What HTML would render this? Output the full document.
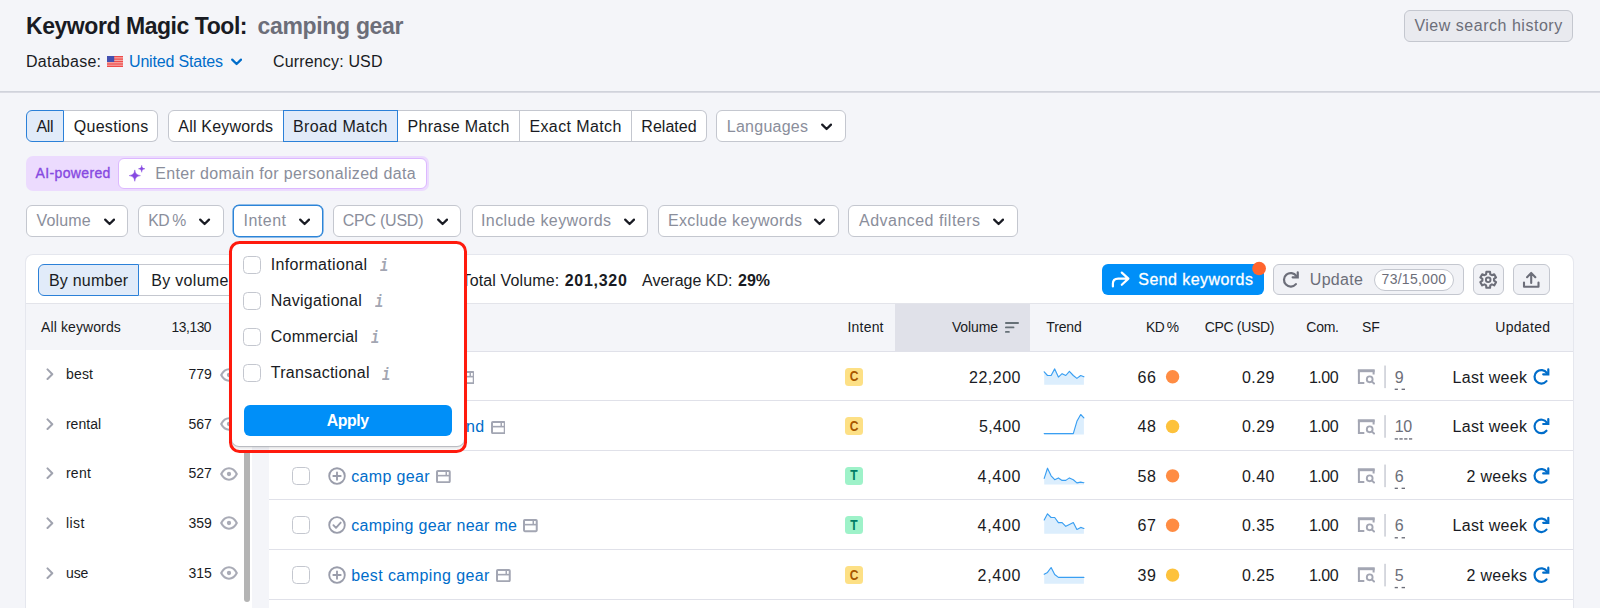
<!DOCTYPE html>
<html lang="en"><head><meta charset="utf-8"><title>Keyword Magic Tool</title>
<style>
html,body{margin:0;padding:0;}
body{width:1600px;height:608px;overflow:hidden;position:relative;background:#f4f5f9;font-family:"Liberation Sans", sans-serif;}
#app{position:absolute;left:0;top:0;width:1600px;height:608px;overflow:hidden;}
#app div,#app svg,#app span.t{position:absolute;box-sizing:border-box;}
span.t{white-space:nowrap;display:block;}

.btn{background:#fff;border:1px solid #c4c7cf;}

</style></head><body><div id="app">
<span class="t" style="top:12px;font-size:23px;line-height:29px;color:#191b23;font-weight:700;letter-spacing:-0.450px;left:26.00px;">Keyword Magic Tool:</span>
<span class="t" style="top:12px;font-size:23px;line-height:29px;color:#6c6e79;font-weight:700;letter-spacing:-0.322px;left:257.50px;">camping gear</span>
<span class="t" style="top:52px;font-size:16px;line-height:20px;color:#191b23;letter-spacing:0.258px;left:26.00px;">Database:</span>
<svg style="left:107.2px;top:56px;" width="16" height="11.2" viewBox="0 0 16 11.2"><rect width="16" height="11" fill="#f7b4b0"/>
<g fill="#ee4b4b"><rect y="0" width="16" height="1.3"/><rect y="2.45" width="16" height="1.3"/><rect y="4.9" width="16" height="1.3"/><rect y="7.35" width="16" height="1.3"/><rect y="9.7" width="16" height="1.3"/></g>
<rect width="7.2" height="6" fill="#4350b0"/></svg>
<span class="t" style="top:52px;font-size:16px;line-height:20px;color:#006dca;letter-spacing:-0.172px;left:129.00px;">United States</span>
<svg style="left:230.9px;top:58.1px;" width="11.2" height="7.6" viewBox="0 0 11.2 7.6"><path d="M1.2 1.6 L5.6 6 L10 1.6" fill="none" stroke="#006dca" stroke-width="2.25" stroke-linecap="round" stroke-linejoin="round"/></svg>
<span class="t" style="top:52px;font-size:16px;line-height:20px;color:#191b23;letter-spacing:0.160px;left:273.00px;">Currency: USD</span>
<div style="left:1403.8px;top:10.3px;width:169px;height:31.4px;background:#e9eaef;border:1px solid #c4c7cf;border-radius:6px;"></div>
<span class="t" style="top:16px;font-size:16px;line-height:20px;color:#6c6e79;letter-spacing:0.520px;left:1414.40px;">View search history</span>
<svg style="left:0px;top:89px;" width="1600" height="6" viewBox="0 89 1600 6"><rect x="0" y="91.2" width="1600" height="1.4" fill="#c8cbd4"/></svg>
<div style="left:64px;top:110px;width:94px;height:32px;background:#fff;border:1px solid #c4c7cf;border-radius:0 6px 6px 0;border-left:none;"></div>
<span class="t" style="top:117px;font-size:16px;line-height:20px;color:#191b23;letter-spacing:0.307px;left:73.70px;">Questions</span>
<div style="left:26px;top:110px;width:38px;height:32px;background:#e1ebf9;border:1px solid #2b80d8;border-radius:6px 0 0 6px;"></div>
<span class="t" style="top:117px;font-size:16px;line-height:20px;color:#191b23;letter-spacing:-0.450px;left:36.60px;">All</span>
<div style="left:168px;top:110px;width:116px;height:32px;background:#fff;border:1px solid #c4c7cf;border-radius:6px 0 0 6px;"></div>
<span class="t" style="top:117px;font-size:16px;line-height:20px;color:#191b23;letter-spacing:0.201px;left:178.30px;">All Keywords</span>
<div style="left:398px;top:110px;width:122px;height:32px;background:#fff;border:1px solid #c4c7cf;border-radius:0 0 0 0;border-left:none;"></div>
<span class="t" style="top:117px;font-size:16px;line-height:20px;color:#191b23;letter-spacing:0.298px;left:407.50px;">Phrase Match</span>
<div style="left:520px;top:110px;width:112px;height:32px;background:#fff;border:1px solid #c4c7cf;border-radius:0 0 0 0;border-left:none;"></div>
<span class="t" style="top:117px;font-size:16px;line-height:20px;color:#191b23;letter-spacing:0.397px;left:529.40px;">Exact Match</span>
<div style="left:632px;top:110px;width:75px;height:32px;background:#fff;border:1px solid #c4c7cf;border-radius:0 6px 6px 0;border-left:none;"></div>
<span class="t" style="top:117px;font-size:16px;line-height:20px;color:#191b23;letter-spacing:0.041px;left:641.30px;">Related</span>
<div style="left:283px;top:110px;width:115px;height:32px;background:#e1ebf9;border:1px solid #2b80d8;border-radius:0 0 0 0;"></div>
<span class="t" style="top:117px;font-size:16px;line-height:20px;color:#191b23;letter-spacing:0.378px;left:293.00px;">Broad Match</span>
<div style="left:716px;top:110px;width:130px;height:32px;background:#fff;border-radius:6px;border:1px solid #c4c7cf;"></div>
<span class="t" style="top:117px;font-size:16px;line-height:20px;color:#8a8e9b;letter-spacing:0.252px;left:726.80px;">Languages</span>
<svg style="left:821px;top:123.4px;" width="11.2" height="7.6" viewBox="0 0 11.2 7.6"><path d="M1.2 1.6 L5.6 6 L10 1.6" fill="none" stroke="#191b23" stroke-width="2.25" stroke-linecap="round" stroke-linejoin="round"/></svg>
<div style="left:26.2px;top:155.8px;width:402.6px;height:35.7px;background:#ecdbfe;border-radius:7px;"></div>
<span class="t" style="top:164px;font-size:14px;line-height:18px;color:#8649e1;letter-spacing:0.356px;left:35.60px;-webkit-text-stroke:0.35px #8649e1;">AI-powered</span>
<div style="left:118px;top:158.2px;width:308.6px;height:30.8px;background:#fff;border:1px solid #dcb8ff;border-radius:6px;"></div>
<svg style="left:129px;top:165.2px;" width="16.4" height="16.6" viewBox="0 0 16.4 16.6"><path d="M5.8 4.9 C6.4 8.7 7.6 9.9 11.4 10.6 C7.6 11.3 6.4 12.5 5.8 16.3 C5.2 12.5 4 11.3 0.2 10.6 C4 9.9 5.2 8.7 5.8 4.9 Z" fill="#8649e1" stroke="#8649e1" stroke-width="0.5" stroke-linejoin="round"/>
<path d="M12.7 0.3 C13 2.7 13.6 3.4 16 3.8 C13.6 4.2 13 4.9 12.7 7.3 C12.4 4.9 11.8 4.2 9.4 3.8 C11.8 3.4 12.4 2.7 12.7 0.3 Z" fill="#8649e1" stroke="#8649e1" stroke-width="0.4" stroke-linejoin="round"/></svg>
<span class="t" style="top:164px;font-size:16px;line-height:20px;color:#8a8e9b;letter-spacing:0.344px;left:155.20px;">Enter domain for personalized data</span>
<div style="left:26px;top:205px;width:102px;height:32px;background:#fff;border-radius:6px;border:1px solid #c4c7cf;"></div>
<span class="t" style="top:211px;font-size:16px;line-height:20px;color:#8a8e9b;letter-spacing:0.125px;left:36.60px;">Volume</span>
<svg style="left:104px;top:218.39999999999998px;" width="11.2" height="7.6" viewBox="0 0 11.2 7.6"><path d="M1.2 1.6 L5.6 6 L10 1.6" fill="none" stroke="#191b23" stroke-width="2.25" stroke-linecap="round" stroke-linejoin="round"/></svg>
<div style="left:138px;top:205px;width:86px;height:32px;background:#fff;border-radius:6px;border:1px solid #c4c7cf;"></div>
<span class="t" style="top:211px;font-size:15.76px;line-height:20px;color:#8a8e9b;letter-spacing:-0.450px;left:148.20px;word-spacing:-0.96px;">KD %</span>
<svg style="left:199.4px;top:218.39999999999998px;" width="11.2" height="7.6" viewBox="0 0 11.2 7.6"><path d="M1.2 1.6 L5.6 6 L10 1.6" fill="none" stroke="#191b23" stroke-width="2.25" stroke-linecap="round" stroke-linejoin="round"/></svg>
<div style="left:233px;top:205px;width:90px;height:32px;background:#fff;border-radius:6px;border:1px solid #2b84d8;box-shadow:0 0 0 0.5px #2b84d8;"></div>
<span class="t" style="top:211px;font-size:16px;line-height:20px;color:#8a8e9b;letter-spacing:0.494px;left:243.50px;">Intent</span>
<svg style="left:298.7px;top:218.39999999999998px;" width="11.2" height="7.6" viewBox="0 0 11.2 7.6"><path d="M1.2 1.6 L5.6 6 L10 1.6" fill="none" stroke="#191b23" stroke-width="2.25" stroke-linecap="round" stroke-linejoin="round"/></svg>
<div style="left:333px;top:205px;width:128px;height:32px;background:#fff;border-radius:6px;border:1px solid #c4c7cf;"></div>
<span class="t" style="top:211px;font-size:16px;line-height:20px;color:#8a8e9b;letter-spacing:-0.246px;left:342.80px;">CPC (USD)</span>
<svg style="left:437.3px;top:218.39999999999998px;" width="11.2" height="7.6" viewBox="0 0 11.2 7.6"><path d="M1.2 1.6 L5.6 6 L10 1.6" fill="none" stroke="#191b23" stroke-width="2.25" stroke-linecap="round" stroke-linejoin="round"/></svg>
<div style="left:472px;top:205px;width:176px;height:32px;background:#fff;border-radius:6px;border:1px solid #c4c7cf;"></div>
<span class="t" style="top:211px;font-size:16px;line-height:20px;color:#8a8e9b;letter-spacing:0.425px;left:481.00px;">Include keywords</span>
<svg style="left:623.7px;top:218.39999999999998px;" width="11.2" height="7.6" viewBox="0 0 11.2 7.6"><path d="M1.2 1.6 L5.6 6 L10 1.6" fill="none" stroke="#191b23" stroke-width="2.25" stroke-linecap="round" stroke-linejoin="round"/></svg>
<div style="left:658px;top:205px;width:181px;height:32px;background:#fff;border-radius:6px;border:1px solid #c4c7cf;"></div>
<span class="t" style="top:211px;font-size:16px;line-height:20px;color:#8a8e9b;letter-spacing:0.336px;left:668.00px;">Exclude keywords</span>
<svg style="left:814.3px;top:218.39999999999998px;" width="11.2" height="7.6" viewBox="0 0 11.2 7.6"><path d="M1.2 1.6 L5.6 6 L10 1.6" fill="none" stroke="#191b23" stroke-width="2.25" stroke-linecap="round" stroke-linejoin="round"/></svg>
<div style="left:848px;top:205px;width:170px;height:32px;background:#fff;border-radius:6px;border:1px solid #c4c7cf;"></div>
<span class="t" style="top:211px;font-size:16px;line-height:20px;color:#8a8e9b;letter-spacing:0.477px;left:859.00px;">Advanced filters</span>
<svg style="left:993px;top:218.39999999999998px;" width="11.2" height="7.6" viewBox="0 0 11.2 7.6"><path d="M1.2 1.6 L5.6 6 L10 1.6" fill="none" stroke="#191b23" stroke-width="2.25" stroke-linecap="round" stroke-linejoin="round"/></svg>
<div style="left:26px;top:255px;width:1547px;height:360px;background:#fff;border-radius:7px 7px 0 0;box-shadow:0 0 0 1px rgba(224,225,233,.75);"></div>
<div style="left:139px;top:264px;width:101px;height:31.5px;background:#fff;border:1px solid #c4c7cf;border-radius:0 6px 6px 0;border-left:none;"></div>
<span class="t" style="top:271px;font-size:16px;line-height:20px;color:#191b23;letter-spacing:0.312px;left:151.20px;">By volume</span>
<div style="left:38px;top:264px;width:101px;height:31.5px;background:#e1ebf9;border:1px solid #2b80d8;border-radius:6px 0 0 6px;"></div>
<span class="t" style="top:271px;font-size:16px;line-height:20px;color:#191b23;letter-spacing:0.241px;left:48.90px;">By number</span>
<span class="t" style="top:271px;font-size:16px;line-height:20px;color:#191b23;letter-spacing:0.136px;left:461.50px;">Total Volume:</span>
<span class="t" style="top:271px;font-size:16px;line-height:20px;color:#191b23;font-weight:700;letter-spacing:0.709px;left:564.70px;">201,320</span>
<span class="t" style="top:271px;font-size:16px;line-height:20px;color:#191b23;letter-spacing:-0.012px;left:642.10px;">Average KD:</span>
<span class="t" style="top:271px;font-size:16px;line-height:20px;color:#191b23;font-weight:700;letter-spacing:-0.016px;left:738.00px;">29%</span>
<div style="left:1102px;top:263.8px;width:161.5px;height:31.6px;background:#008ff8;border-radius:6px;"></div>
<svg style="left:1110px;top:270px;" width="21" height="19" viewBox="1110 270 21 19"><path d="M1112.9 286.4 V283.6 C1112.9 280.4 1115 278.6 1118.2 278.6 H1127.8 M1121.8 272.6 L1128.4 278.6 L1121.8 284.8" fill="none" stroke="#fff" stroke-width="2.2" stroke-linecap="round" stroke-linejoin="round"/></svg>
<span class="t" style="top:270px;font-size:16px;line-height:20px;color:#fff;letter-spacing:0.434px;left:1138.30px;-webkit-text-stroke:0.3px #fff;">Send keywords</span>
<svg style="left:1250px;top:259px;" width="18" height="18" viewBox="1250 259 18 18"><circle cx="1259.1" cy="268.5" r="6.85" fill="#ff642d"/></svg>
<div style="left:1273px;top:264px;width:190.5px;height:31.4px;background:#f1f2f6;border:1px solid #c4c7cf;border-radius:6px;"></div>
<svg style="left:1279px;top:268px;" width="22" height="22" viewBox="1279 268 22 22"><path d="M1296.28 275.93 A6.75 6.75 0 1 0 1295.92 284.14" fill="none" stroke="#6c6e79" stroke-width="2.2" stroke-linecap="round"/><path d="M1297.75 272.40 V277.35 H1292.65" fill="none" stroke="#6c6e79" stroke-width="2.2" stroke-linecap="round" stroke-linejoin="miter"/></svg>
<span class="t" style="top:270px;font-size:16px;line-height:20px;color:#6c6e79;letter-spacing:0.321px;left:1309.75px;">Update</span>
<div style="left:1373.5px;top:268.6px;width:80.5px;height:22px;background:#fff;border:1px solid #c4c7cf;border-radius:11px;"></div>
<span class="t" style="top:270px;font-size:14px;line-height:18px;color:#6c6e79;letter-spacing:0.263px;left:1381.60px;">73/15,000</span>
<div style="left:1472.6px;top:264px;width:31.2px;height:31.4px;background:#f1f2f6;border:1px solid #c4c7cf;border-radius:6px;"></div>
<svg style="left:1477px;top:268px;" width="24" height="24" viewBox="1477 268 24 24"><path d="M1486.09 274.29 L1486.36 271.81 L1490.04 271.81 L1490.31 274.29 L1491.91 275.21 L1494.20 274.21 L1496.04 277.40 L1494.03 278.88 L1494.03 280.72 L1496.04 282.20 L1494.20 285.39 L1491.91 284.39 L1490.31 285.31 L1490.04 287.79 L1486.36 287.79 L1486.09 285.31 L1484.49 284.39 L1482.20 285.39 L1480.36 282.20 L1482.37 280.72 L1482.37 278.88 L1480.36 277.40 L1482.20 274.21 L1484.49 275.21 Z" fill="none" stroke="#6c6e79" stroke-width="2.1" stroke-linejoin="round"/><circle cx="1488.2" cy="279.8" r="2.3" fill="none" stroke="#6c6e79" stroke-width="1.9"/></svg>
<div style="left:1513.2px;top:264px;width:37px;height:31.4px;background:#f1f2f6;border:1px solid #c4c7cf;border-radius:6px;"></div>
<svg style="left:1520px;top:268px;" width="24" height="24" viewBox="1520 268 24 24"><path d="M1531.2 283 V273 M1527.1 277.2 L1531.2 272.9 L1535.3 277.2 M1524 282.6 V286.8 H1538.5 V282.6" fill="none" stroke="#6c6e79" stroke-width="2.1" stroke-linejoin="round" stroke-linecap="round"/></svg>
<div style="left:26px;top:303px;width:226px;height:47px;background:#f4f5f9;border-top:1px solid #e3e4ea;"></div>
<span class="t" style="top:318px;font-size:14px;line-height:18px;color:#191b23;letter-spacing:0.110px;left:41.00px;">All keywords</span>
<span class="t" style="top:319px;font-size:13.79px;line-height:17px;color:#191b23;letter-spacing:-0.450px;right:1388.95px;">13,130</span>
<div style="left:252px;top:304px;width:17px;height:320px;background:#f4f5f9;"></div>
<div style="left:244px;top:450px;width:6px;height:151.5px;background:#b4b4b4;border-radius:3px;"></div>
<svg style="left:45.6px;top:368.1px;" width="8" height="12.4" viewBox="0 0 8 12.4"><path d="M1.5 1.4 L6.3 6.2 L1.5 11" fill="none" stroke="#a0a3af" stroke-width="2" stroke-linecap="round" stroke-linejoin="round"/></svg>
<span class="t" style="top:365px;font-size:14px;line-height:18px;color:#191b23;letter-spacing:0.210px;left:65.90px;">best</span>
<span class="t" style="top:365px;font-size:14px;line-height:18px;color:#191b23;letter-spacing:-0.030px;right:1388.33px;">779</span>
<svg style="left:220.2px;top:367.5px;" width="18" height="14" viewBox="0 0 18 14"><path d="M1.2 7 C3.2 3.2 6 1.3 9 1.3 C12 1.3 14.8 3.2 16.8 7 C14.8 10.8 12 12.7 9 12.7 C6 12.7 3.2 10.8 1.2 7 Z" fill="none" stroke="#a9abb6" stroke-width="2.1" stroke-linejoin="round"/><circle cx="9" cy="7" r="2.15" fill="#a9abb6"/></svg>
<svg style="left:45.6px;top:417.7px;" width="8" height="12.4" viewBox="0 0 8 12.4"><path d="M1.5 1.4 L6.3 6.2 L1.5 11" fill="none" stroke="#a0a3af" stroke-width="2" stroke-linecap="round" stroke-linejoin="round"/></svg>
<span class="t" style="top:415px;font-size:14px;line-height:18px;color:#191b23;letter-spacing:0.034px;left:65.90px;">rental</span>
<span class="t" style="top:415px;font-size:14px;line-height:18px;color:#191b23;letter-spacing:-0.030px;right:1388.33px;">567</span>
<svg style="left:220.2px;top:417.09999999999997px;" width="18" height="14" viewBox="0 0 18 14"><path d="M1.2 7 C3.2 3.2 6 1.3 9 1.3 C12 1.3 14.8 3.2 16.8 7 C14.8 10.8 12 12.7 9 12.7 C6 12.7 3.2 10.8 1.2 7 Z" fill="none" stroke="#a9abb6" stroke-width="2.1" stroke-linejoin="round"/><circle cx="9" cy="7" r="2.15" fill="#a9abb6"/></svg>
<svg style="left:45.6px;top:467.3px;" width="8" height="12.4" viewBox="0 0 8 12.4"><path d="M1.5 1.4 L6.3 6.2 L1.5 11" fill="none" stroke="#a0a3af" stroke-width="2" stroke-linecap="round" stroke-linejoin="round"/></svg>
<span class="t" style="top:464px;font-size:14px;line-height:18px;color:#191b23;letter-spacing:0.292px;left:65.90px;">rent</span>
<span class="t" style="top:464px;font-size:14px;line-height:18px;color:#191b23;letter-spacing:-0.030px;right:1388.33px;">527</span>
<svg style="left:220.2px;top:466.7px;" width="18" height="14" viewBox="0 0 18 14"><path d="M1.2 7 C3.2 3.2 6 1.3 9 1.3 C12 1.3 14.8 3.2 16.8 7 C14.8 10.8 12 12.7 9 12.7 C6 12.7 3.2 10.8 1.2 7 Z" fill="none" stroke="#a9abb6" stroke-width="2.1" stroke-linejoin="round"/><circle cx="9" cy="7" r="2.15" fill="#a9abb6"/></svg>
<svg style="left:45.6px;top:516.9px;" width="8" height="12.4" viewBox="0 0 8 12.4"><path d="M1.5 1.4 L6.3 6.2 L1.5 11" fill="none" stroke="#a0a3af" stroke-width="2" stroke-linecap="round" stroke-linejoin="round"/></svg>
<span class="t" style="top:514px;font-size:14px;line-height:18px;color:#191b23;letter-spacing:0.458px;left:65.90px;">list</span>
<span class="t" style="top:514px;font-size:14px;line-height:18px;color:#191b23;letter-spacing:-0.030px;right:1388.33px;">359</span>
<svg style="left:220.2px;top:516.3px;" width="18" height="14" viewBox="0 0 18 14"><path d="M1.2 7 C3.2 3.2 6 1.3 9 1.3 C12 1.3 14.8 3.2 16.8 7 C14.8 10.8 12 12.7 9 12.7 C6 12.7 3.2 10.8 1.2 7 Z" fill="none" stroke="#a9abb6" stroke-width="2.1" stroke-linejoin="round"/><circle cx="9" cy="7" r="2.15" fill="#a9abb6"/></svg>
<svg style="left:45.6px;top:566.5px;" width="8" height="12.4" viewBox="0 0 8 12.4"><path d="M1.5 1.4 L6.3 6.2 L1.5 11" fill="none" stroke="#a0a3af" stroke-width="2" stroke-linecap="round" stroke-linejoin="round"/></svg>
<span class="t" style="top:564px;font-size:14px;line-height:18px;color:#191b23;letter-spacing:-0.039px;left:65.90px;">use</span>
<span class="t" style="top:564px;font-size:14px;line-height:18px;color:#191b23;letter-spacing:-0.030px;right:1388.33px;">315</span>
<svg style="left:220.2px;top:565.9px;" width="18" height="14" viewBox="0 0 18 14"><path d="M1.2 7 C3.2 3.2 6 1.3 9 1.3 C12 1.3 14.8 3.2 16.8 7 C14.8 10.8 12 12.7 9 12.7 C6 12.7 3.2 10.8 1.2 7 Z" fill="none" stroke="#a9abb6" stroke-width="2.1" stroke-linejoin="round"/><circle cx="9" cy="7" r="2.15" fill="#a9abb6"/></svg>
<div style="left:269px;top:303px;width:1304px;height:48px;background:#f4f5f9;border-top:1px solid #e3e4ea;"></div>
<div style="left:269px;top:351px;width:1304px;height:1px;background:#e0e1e9;"></div>
<div style="left:895px;top:304px;width:135px;height:47px;background:#e0e1e9;"></div>
<span class="t" style="top:318px;font-size:14px;line-height:18px;color:#191b23;letter-spacing:0.194px;left:847.50px;">Intent</span>
<span class="t" style="top:318px;font-size:14px;line-height:18px;color:#191b23;letter-spacing:-0.101px;left:951.90px;">Volume</span>
<svg style="left:1005px;top:321.6px;" width="14" height="11" viewBox="0 0 14 11"><g fill="#667077"><rect x="0" y="0" width="14" height="1.9" rx=".9"/><rect x="0" y="4.45" width="9.4" height="1.9" rx=".9"/><rect x="0" y="8.9" width="4.8" height="1.9" rx=".9"/></g></svg>
<span class="t" style="top:318px;font-size:14px;line-height:18px;color:#191b23;letter-spacing:-0.141px;left:1046.30px;">Trend</span>
<span class="t" style="top:319px;font-size:13.79px;line-height:17px;color:#191b23;letter-spacing:-0.450px;left:1146.00px;word-spacing:-0.84px;">KD %</span>
<span class="t" style="top:318px;font-size:14px;line-height:18px;color:#191b23;letter-spacing:-0.318px;left:1204.70px;">CPC (USD)</span>
<span class="t" style="top:318px;font-size:14px;line-height:18px;color:#191b23;letter-spacing:-0.251px;left:1306.30px;">Com.</span>
<span class="t" style="top:318px;font-size:14px;line-height:18px;color:#191b23;left:1362.00px;">SF</span>
<span class="t" style="top:318px;font-size:14px;line-height:18px;color:#191b23;letter-spacing:0.294px;left:1495.30px;">Updated</span>
<div style="left:269px;top:400px;width:1304px;height:1px;background:#e0e1e9;"></div>
<div style="left:292px;top:368px;width:18px;height:18px;background:#fff;border:1px solid #c4c7cf;border-radius:4.5px;"></div>
<svg style="left:327.3px;top:366.82499999999993px;" width="20" height="20" viewBox="0 0 20 20"><circle cx="10" cy="10" r="7.8" fill="none" stroke="#9a9dab" stroke-width="1.85"/><path d="M10 6.3 V13.7 M6.3 10 H13.7" stroke="#9a9dab" stroke-width="1.85" stroke-linecap="round"/></svg>
<span class="t" style="top:368px;font-size:16px;line-height:20px;color:#006dca;letter-spacing:0.459px;left:351.20px;">camping gear</span>
<svg style="left:459.55px;top:370.92499999999995px;" width="14.75" height="13.15" viewBox="0 0 14.75 13.15"><rect x="1" y="1" width="12.75" height="11.15" rx="0.8" fill="none" stroke="#a3a6b3" stroke-width="2"/><path d="M1 5.65 H13.75" stroke="#a3a6b3" stroke-width="1.6"/><path d="M10.25 1 V5.65" stroke="#a3a6b3" stroke-width="1.5"/></svg>
<div style="left:845px;top:368px;width:18px;height:18px;background:#fde085;border-radius:3.5px;"></div>
<span class="t" style="top:367px;font-size:14px;line-height:18px;color:#a75800;font-weight:700;left:845.00px;width:18px;text-align:center;transform:scaleX(0.86);">C</span>
<span class="t" style="top:368px;font-size:16px;line-height:20px;color:#191b23;letter-spacing:0.512px;right:578.99px;">22,200</span>
<svg style="left:1040px;top:360px;" width="50" height="28" viewBox="1040 360 50 28"><path d="M1044.2 371.8 L1047.5 375.5 L1051.1 375.5 L1054.7 368.9 L1058.4 377.1 L1062.1 373.7 L1065.8 375.5 L1069.4 371.3 L1073.3 375.5 L1076.9 378.4 L1080.7 375.5 L1083.9 376.8 L1083.9 384.7 L1044.2 384.7 Z" fill="#dceefd"/><path d="M1044.2 371.8 L1047.5 375.5 L1051.1 375.5 L1054.7 368.9 L1058.4 377.1 L1062.1 373.7 L1065.8 375.5 L1069.4 371.3 L1073.3 375.5 L1076.9 378.4 L1080.7 375.5 L1083.9 376.8" fill="none" stroke="#3a9ff2" stroke-width="1.15" stroke-linejoin="round" stroke-linecap="round"/></svg>
<span class="t" style="top:368px;font-size:16px;line-height:20px;color:#191b23;letter-spacing:0.603px;right:443.40px;">66</span>
<svg style="left:1162px;top:366px;" width="20" height="20" viewBox="1162 366 20 20"><circle cx="1172.6" cy="376.82" r="6.7" fill="#ff8c43"/></svg>
<span class="t" style="top:368px;font-size:16px;line-height:20px;color:#191b23;letter-spacing:0.453px;right:325.05px;">0.29</span>
<span class="t" style="top:368px;font-size:16px;line-height:20px;color:#191b23;letter-spacing:-0.450px;right:261.75px;">1.00</span>
<svg style="left:1356.6px;top:368.92499999999995px;" width="18" height="16" viewBox="0 0 18 16"><path d="M16.6 5.6 V1.5 H1.9 V14 H7.3" fill="none" stroke="#a3a6b3" stroke-width="2" stroke-linejoin="miter"/><rect x="0.9" y="0.5" width="16.7" height="2.7" fill="#a3a6b3"/><circle cx="12.7" cy="10.3" r="2.9" fill="none" stroke="#a3a6b3" stroke-width="1.9"/><path d="M15 12.6 L17 14.5" stroke="#a3a6b3" stroke-width="2" stroke-linecap="round"/></svg>
<svg style="left:1380px;top:362px;" width="10" height="28" viewBox="1380 362 10 28"><rect x="1384.25" y="365.52" width="1.6" height="22.6" fill="#cdd0d8"/></svg>
<span class="t" style="top:368px;font-size:16px;line-height:20px;color:#6c6e79;left:1394.70px;">9</span>
<svg style="left:1390px;top:384px;" width="30" height="8" viewBox="1390 384 30 8"><rect x="1394.70" y="388.62" width="3.2" height="1.35" fill="#6c6e79"/><rect x="1401.60" y="388.62" width="3.4" height="1.35" fill="#6c6e79"/></svg>
<span class="t" style="top:368px;font-size:16px;line-height:20px;color:#191b23;letter-spacing:0.294px;right:72.71px;">Last week</span>
<svg style="left:1530px;top:365px;" width="22" height="22" viewBox="1530 365 22 22"><path d="M1546.83 372.95 A6.75 6.75 0 1 0 1546.47 381.16" fill="none" stroke="#006dca" stroke-width="2.2" stroke-linecap="round"/><path d="M1548.30 369.42 V374.37 H1543.20" fill="none" stroke="#006dca" stroke-width="2.2" stroke-linecap="round" stroke-linejoin="miter"/></svg>
<div style="left:269px;top:450px;width:1304px;height:1px;background:#e0e1e9;"></div>
<div style="left:292px;top:417px;width:18px;height:18px;background:#fff;border:1px solid #c4c7cf;border-radius:4.5px;"></div>
<svg style="left:327.3px;top:416.44999999999993px;" width="20" height="20" viewBox="0 0 20 20"><circle cx="10" cy="10" r="7.8" fill="none" stroke="#9a9dab" stroke-width="1.85"/><path d="M10 6.3 V13.7 M6.3 10 H13.7" stroke="#9a9dab" stroke-width="1.85" stroke-linecap="round"/></svg>
<span class="t" style="top:417px;font-size:16px;line-height:20px;color:#006dca;letter-spacing:0.327px;left:351.20px;">camping gear and</span>
<svg style="left:490.55px;top:420.54999999999995px;" width="14.75" height="13.15" viewBox="0 0 14.75 13.15"><rect x="1" y="1" width="12.75" height="11.15" rx="0.8" fill="none" stroke="#a3a6b3" stroke-width="2"/><path d="M1 5.65 H13.75" stroke="#a3a6b3" stroke-width="1.6"/><path d="M10.25 1 V5.65" stroke="#a3a6b3" stroke-width="1.5"/></svg>
<div style="left:845px;top:417px;width:18px;height:18px;background:#fde085;border-radius:3.5px;"></div>
<span class="t" style="top:417px;font-size:14px;line-height:18px;color:#a75800;font-weight:700;left:845.00px;width:18px;text-align:center;transform:scaleX(0.86);">C</span>
<span class="t" style="top:417px;font-size:16px;line-height:20px;color:#191b23;letter-spacing:0.363px;right:579.14px;">5,400</span>
<svg style="left:1040px;top:410px;" width="50" height="28" viewBox="1040 410 50 28"><path d="M1044.2 433.6 L1047.5 433.6 L1051.1 433.6 L1054.7 433.6 L1058.4 433.6 L1062.1 433.6 L1065.8 433.6 L1069.4 433.6 L1073.3 433.6 L1076.9 421.3 L1080.7 414.5 L1083.9 417.9 L1083.9 434.5 L1044.2 434.5 Z" fill="#dceefd"/><path d="M1044.2 433.6 L1047.5 433.6 L1051.1 433.6 L1054.7 433.6 L1058.4 433.6 L1062.1 433.6 L1065.8 433.6 L1069.4 433.6 L1073.3 433.6 L1076.9 421.3 L1080.7 414.5 L1083.9 417.9" fill="none" stroke="#3a9ff2" stroke-width="1.15" stroke-linejoin="round" stroke-linecap="round"/></svg>
<span class="t" style="top:417px;font-size:16px;line-height:20px;color:#191b23;letter-spacing:0.603px;right:443.40px;">48</span>
<svg style="left:1162px;top:416px;" width="20" height="20" viewBox="1162 416 20 20"><circle cx="1172.6" cy="426.45" r="6.7" fill="#fdc23c"/></svg>
<span class="t" style="top:417px;font-size:16px;line-height:20px;color:#191b23;letter-spacing:0.453px;right:325.05px;">0.29</span>
<span class="t" style="top:417px;font-size:16px;line-height:20px;color:#191b23;letter-spacing:-0.450px;right:261.75px;">1.00</span>
<svg style="left:1356.6px;top:418.54999999999995px;" width="18" height="16" viewBox="0 0 18 16"><path d="M16.6 5.6 V1.5 H1.9 V14 H7.3" fill="none" stroke="#a3a6b3" stroke-width="2" stroke-linejoin="miter"/><rect x="0.9" y="0.5" width="16.7" height="2.7" fill="#a3a6b3"/><circle cx="12.7" cy="10.3" r="2.9" fill="none" stroke="#a3a6b3" stroke-width="1.9"/><path d="M15 12.6 L17 14.5" stroke="#a3a6b3" stroke-width="2" stroke-linecap="round"/></svg>
<svg style="left:1380px;top:412px;" width="10" height="28" viewBox="1380 412 10 28"><rect x="1384.25" y="415.15" width="1.6" height="22.6" fill="#cdd0d8"/></svg>
<span class="t" style="top:417px;font-size:16px;line-height:20px;color:#6c6e79;letter-spacing:-0.297px;left:1394.70px;">10</span>
<svg style="left:1390px;top:434px;" width="30" height="8" viewBox="1390 434 30 8"><rect x="1394.70" y="438.25" width="3.2" height="1.35" fill="#6c6e79"/><rect x="1399.40" y="438.25" width="3.3" height="1.35" fill="#6c6e79"/><rect x="1404.20" y="438.25" width="3.2" height="1.35" fill="#6c6e79"/><rect x="1409.00" y="438.25" width="3.2" height="1.35" fill="#6c6e79"/></svg>
<span class="t" style="top:417px;font-size:16px;line-height:20px;color:#191b23;letter-spacing:0.294px;right:72.71px;">Last week</span>
<svg style="left:1530px;top:415px;" width="22" height="22" viewBox="1530 415 22 22"><path d="M1546.83 422.58 A6.75 6.75 0 1 0 1546.47 430.79" fill="none" stroke="#006dca" stroke-width="2.2" stroke-linecap="round"/><path d="M1548.30 419.05 V424.00 H1543.20" fill="none" stroke="#006dca" stroke-width="2.2" stroke-linecap="round" stroke-linejoin="miter"/></svg>
<div style="left:269px;top:499px;width:1304px;height:1px;background:#e0e1e9;"></div>
<div style="left:292px;top:467px;width:18px;height:18px;background:#fff;border:1px solid #c4c7cf;border-radius:4.5px;"></div>
<svg style="left:327.3px;top:465.84999999999997px;" width="20" height="20" viewBox="0 0 20 20"><circle cx="10" cy="10" r="7.8" fill="none" stroke="#9a9dab" stroke-width="1.85"/><path d="M10 6.3 V13.7 M6.3 10 H13.7" stroke="#9a9dab" stroke-width="1.85" stroke-linecap="round"/></svg>
<span class="t" style="top:467px;font-size:16px;line-height:20px;color:#006dca;letter-spacing:0.351px;left:351.20px;">camp gear</span>
<svg style="left:435.95000000000005px;top:469.95px;" width="14.75" height="13.15" viewBox="0 0 14.75 13.15"><rect x="1" y="1" width="12.75" height="11.15" rx="0.8" fill="none" stroke="#a3a6b3" stroke-width="2"/><path d="M1 5.65 H13.75" stroke="#a3a6b3" stroke-width="1.6"/><path d="M10.25 1 V5.65" stroke="#a3a6b3" stroke-width="1.5"/></svg>
<div style="left:845px;top:467px;width:18px;height:18px;background:#9ef2c9;border-radius:3.5px;"></div>
<span class="t" style="top:466px;font-size:14px;line-height:18px;color:#007c65;font-weight:700;left:845.00px;width:18px;text-align:center;transform:scaleX(0.86);">T</span>
<span class="t" style="top:467px;font-size:16px;line-height:20px;color:#191b23;letter-spacing:0.738px;right:578.76px;">4,400</span>
<svg style="left:1040px;top:460px;" width="50" height="28" viewBox="1040 460 50 28"><path d="M1044.2 478.4 L1047.5 468.2 L1051.1 475.8 L1054.7 479.7 L1058.4 477.9 L1062.1 480.4 L1065.8 480.4 L1069.4 477.9 L1073.3 479.7 L1076.9 482.9 L1080.7 482.1 L1083.9 482.7 L1083.9 484.5 L1044.2 484.5 Z" fill="#dceefd"/><path d="M1044.2 478.4 L1047.5 468.2 L1051.1 475.8 L1054.7 479.7 L1058.4 477.9 L1062.1 480.4 L1065.8 480.4 L1069.4 477.9 L1073.3 479.7 L1076.9 482.9 L1080.7 482.1 L1083.9 482.7" fill="none" stroke="#3a9ff2" stroke-width="1.15" stroke-linejoin="round" stroke-linecap="round"/></svg>
<span class="t" style="top:467px;font-size:16px;line-height:20px;color:#191b23;letter-spacing:0.603px;right:443.40px;">58</span>
<svg style="left:1162px;top:465px;" width="20" height="20" viewBox="1162 465 20 20"><circle cx="1172.6" cy="475.85" r="6.7" fill="#ff8c43"/></svg>
<span class="t" style="top:467px;font-size:16px;line-height:20px;color:#191b23;letter-spacing:0.453px;right:325.05px;">0.40</span>
<span class="t" style="top:467px;font-size:16px;line-height:20px;color:#191b23;letter-spacing:-0.450px;right:261.75px;">1.00</span>
<svg style="left:1356.6px;top:467.95px;" width="18" height="16" viewBox="0 0 18 16"><path d="M16.6 5.6 V1.5 H1.9 V14 H7.3" fill="none" stroke="#a3a6b3" stroke-width="2" stroke-linejoin="miter"/><rect x="0.9" y="0.5" width="16.7" height="2.7" fill="#a3a6b3"/><circle cx="12.7" cy="10.3" r="2.9" fill="none" stroke="#a3a6b3" stroke-width="1.9"/><path d="M15 12.6 L17 14.5" stroke="#a3a6b3" stroke-width="2" stroke-linecap="round"/></svg>
<svg style="left:1380px;top:461px;" width="10" height="28" viewBox="1380 461 10 28"><rect x="1384.25" y="464.55" width="1.6" height="22.6" fill="#cdd0d8"/></svg>
<span class="t" style="top:467px;font-size:16px;line-height:20px;color:#6c6e79;left:1394.70px;">6</span>
<svg style="left:1390px;top:483px;" width="30" height="8" viewBox="1390 483 30 8"><rect x="1394.70" y="487.65" width="3.2" height="1.35" fill="#6c6e79"/><rect x="1401.60" y="487.65" width="3.4" height="1.35" fill="#6c6e79"/></svg>
<span class="t" style="top:467px;font-size:16px;line-height:20px;color:#191b23;letter-spacing:0.299px;right:72.70px;">2 weeks</span>
<svg style="left:1530px;top:464px;" width="22" height="22" viewBox="1530 464 22 22"><path d="M1546.83 471.98 A6.75 6.75 0 1 0 1546.47 480.19" fill="none" stroke="#006dca" stroke-width="2.2" stroke-linecap="round"/><path d="M1548.30 468.45 V473.40 H1543.20" fill="none" stroke="#006dca" stroke-width="2.2" stroke-linecap="round" stroke-linejoin="miter"/></svg>
<div style="left:269px;top:549px;width:1304px;height:1px;background:#e0e1e9;"></div>
<div style="left:292px;top:516px;width:18px;height:18px;background:#fff;border:1px solid #c4c7cf;border-radius:4.5px;"></div>
<svg style="left:327.3px;top:515.3px;" width="20" height="20" viewBox="0 0 20 20"><circle cx="10" cy="10" r="7.8" fill="none" stroke="#9a9dab" stroke-width="1.85"/><path d="M6.4 10.2 L9 12.8 L13.7 7.6" fill="none" stroke="#9a9dab" stroke-width="1.85" stroke-linecap="round" stroke-linejoin="round"/></svg>
<span class="t" style="top:516px;font-size:16px;line-height:20px;color:#006dca;letter-spacing:0.300px;left:351.20px;">camping gear near me</span>
<svg style="left:523.35px;top:519.4px;" width="14.75" height="13.15" viewBox="0 0 14.75 13.15"><rect x="1" y="1" width="12.75" height="11.15" rx="0.8" fill="none" stroke="#a3a6b3" stroke-width="2"/><path d="M1 5.65 H13.75" stroke="#a3a6b3" stroke-width="1.6"/><path d="M10.25 1 V5.65" stroke="#a3a6b3" stroke-width="1.5"/></svg>
<div style="left:845px;top:516px;width:18px;height:18px;background:#9ef2c9;border-radius:3.5px;"></div>
<span class="t" style="top:516px;font-size:14px;line-height:18px;color:#007c65;font-weight:700;left:845.00px;width:18px;text-align:center;transform:scaleX(0.86);">T</span>
<span class="t" style="top:516px;font-size:16px;line-height:20px;color:#191b23;letter-spacing:0.738px;right:578.76px;">4,400</span>
<svg style="left:1040px;top:509px;" width="50" height="28" viewBox="1040 509 50 28"><path d="M1044.2 520.0 L1047.5 513.8 L1051.1 517.5 L1054.7 517.5 L1058.4 522.6 L1062.1 522.6 L1065.8 526.3 L1069.4 524.5 L1073.3 522.6 L1076.9 529.5 L1080.7 527.4 L1083.9 528.5 L1083.9 533.7 L1044.2 533.7 Z" fill="#dceefd"/><path d="M1044.2 520.0 L1047.5 513.8 L1051.1 517.5 L1054.7 517.5 L1058.4 522.6 L1062.1 522.6 L1065.8 526.3 L1069.4 524.5 L1073.3 522.6 L1076.9 529.5 L1080.7 527.4 L1083.9 528.5" fill="none" stroke="#3a9ff2" stroke-width="1.15" stroke-linejoin="round" stroke-linecap="round"/></svg>
<span class="t" style="top:516px;font-size:16px;line-height:20px;color:#191b23;letter-spacing:0.603px;right:443.40px;">67</span>
<svg style="left:1162px;top:515px;" width="20" height="20" viewBox="1162 515 20 20"><circle cx="1172.6" cy="525.30" r="6.7" fill="#ff8c43"/></svg>
<span class="t" style="top:516px;font-size:16px;line-height:20px;color:#191b23;letter-spacing:0.453px;right:325.05px;">0.35</span>
<span class="t" style="top:516px;font-size:16px;line-height:20px;color:#191b23;letter-spacing:-0.450px;right:261.75px;">1.00</span>
<svg style="left:1356.6px;top:517.4px;" width="18" height="16" viewBox="0 0 18 16"><path d="M16.6 5.6 V1.5 H1.9 V14 H7.3" fill="none" stroke="#a3a6b3" stroke-width="2" stroke-linejoin="miter"/><rect x="0.9" y="0.5" width="16.7" height="2.7" fill="#a3a6b3"/><circle cx="12.7" cy="10.3" r="2.9" fill="none" stroke="#a3a6b3" stroke-width="1.9"/><path d="M15 12.6 L17 14.5" stroke="#a3a6b3" stroke-width="2" stroke-linecap="round"/></svg>
<svg style="left:1380px;top:511px;" width="10" height="28" viewBox="1380 511 10 28"><rect x="1384.25" y="514.00" width="1.6" height="22.6" fill="#cdd0d8"/></svg>
<span class="t" style="top:516px;font-size:16px;line-height:20px;color:#6c6e79;left:1394.70px;">6</span>
<svg style="left:1390px;top:533px;" width="30" height="8" viewBox="1390 533 30 8"><rect x="1394.70" y="537.10" width="3.2" height="1.35" fill="#6c6e79"/><rect x="1401.60" y="537.10" width="3.4" height="1.35" fill="#6c6e79"/></svg>
<span class="t" style="top:516px;font-size:16px;line-height:20px;color:#191b23;letter-spacing:0.294px;right:72.71px;">Last week</span>
<svg style="left:1530px;top:514px;" width="22" height="22" viewBox="1530 514 22 22"><path d="M1546.83 521.43 A6.75 6.75 0 1 0 1546.47 529.64" fill="none" stroke="#006dca" stroke-width="2.2" stroke-linecap="round"/><path d="M1548.30 517.90 V522.85 H1543.20" fill="none" stroke="#006dca" stroke-width="2.2" stroke-linecap="round" stroke-linejoin="miter"/></svg>
<div style="left:269px;top:599px;width:1304px;height:1px;background:#e0e1e9;"></div>
<div style="left:292px;top:566px;width:18px;height:18px;background:#fff;border:1px solid #c4c7cf;border-radius:4.5px;"></div>
<svg style="left:327.3px;top:565.1px;" width="20" height="20" viewBox="0 0 20 20"><circle cx="10" cy="10" r="7.8" fill="none" stroke="#9a9dab" stroke-width="1.85"/><path d="M10 6.3 V13.7 M6.3 10 H13.7" stroke="#9a9dab" stroke-width="1.85" stroke-linecap="round"/></svg>
<span class="t" style="top:566px;font-size:16px;line-height:20px;color:#006dca;letter-spacing:0.410px;left:351.20px;">best camping gear</span>
<svg style="left:495.75px;top:569.2px;" width="14.75" height="13.15" viewBox="0 0 14.75 13.15"><rect x="1" y="1" width="12.75" height="11.15" rx="0.8" fill="none" stroke="#a3a6b3" stroke-width="2"/><path d="M1 5.65 H13.75" stroke="#a3a6b3" stroke-width="1.6"/><path d="M10.25 1 V5.65" stroke="#a3a6b3" stroke-width="1.5"/></svg>
<div style="left:845px;top:566px;width:18px;height:18px;background:#fde085;border-radius:3.5px;"></div>
<span class="t" style="top:566px;font-size:14px;line-height:18px;color:#a75800;font-weight:700;left:845.00px;width:18px;text-align:center;transform:scaleX(0.86);">C</span>
<span class="t" style="top:566px;font-size:16px;line-height:20px;color:#191b23;letter-spacing:0.738px;right:578.76px;">2,400</span>
<svg style="left:1040px;top:559px;" width="50" height="28" viewBox="1040 559 50 28"><path d="M1044.2 574.3 L1047.5 572.4 L1051.1 567.5 L1054.7 574.5 L1058.4 577.4 L1062.1 577.4 L1065.8 577.4 L1069.4 577.4 L1073.3 577.4 L1076.9 577.4 L1080.7 577.4 L1083.9 577.4 L1083.9 583.7 L1044.2 583.7 Z" fill="#dceefd"/><path d="M1044.2 574.3 L1047.5 572.4 L1051.1 567.5 L1054.7 574.5 L1058.4 577.4 L1062.1 577.4 L1065.8 577.4 L1069.4 577.4 L1073.3 577.4 L1076.9 577.4 L1080.7 577.4 L1083.9 577.4" fill="none" stroke="#3a9ff2" stroke-width="1.15" stroke-linejoin="round" stroke-linecap="round"/></svg>
<span class="t" style="top:566px;font-size:16px;line-height:20px;color:#191b23;letter-spacing:0.603px;right:443.40px;">39</span>
<svg style="left:1162px;top:565px;" width="20" height="20" viewBox="1162 565 20 20"><circle cx="1172.6" cy="575.10" r="6.7" fill="#fdc23c"/></svg>
<span class="t" style="top:566px;font-size:16px;line-height:20px;color:#191b23;letter-spacing:0.453px;right:325.05px;">0.25</span>
<span class="t" style="top:566px;font-size:16px;line-height:20px;color:#191b23;letter-spacing:-0.450px;right:261.75px;">1.00</span>
<svg style="left:1356.6px;top:567.2px;" width="18" height="16" viewBox="0 0 18 16"><path d="M16.6 5.6 V1.5 H1.9 V14 H7.3" fill="none" stroke="#a3a6b3" stroke-width="2" stroke-linejoin="miter"/><rect x="0.9" y="0.5" width="16.7" height="2.7" fill="#a3a6b3"/><circle cx="12.7" cy="10.3" r="2.9" fill="none" stroke="#a3a6b3" stroke-width="1.9"/><path d="M15 12.6 L17 14.5" stroke="#a3a6b3" stroke-width="2" stroke-linecap="round"/></svg>
<svg style="left:1380px;top:561px;" width="10" height="28" viewBox="1380 561 10 28"><rect x="1384.25" y="563.80" width="1.6" height="22.6" fill="#cdd0d8"/></svg>
<span class="t" style="top:566px;font-size:16px;line-height:20px;color:#6c6e79;left:1394.70px;">5</span>
<svg style="left:1390px;top:583px;" width="30" height="8" viewBox="1390 583 30 8"><rect x="1394.70" y="586.90" width="3.2" height="1.35" fill="#6c6e79"/><rect x="1401.60" y="586.90" width="3.4" height="1.35" fill="#6c6e79"/></svg>
<span class="t" style="top:566px;font-size:16px;line-height:20px;color:#191b23;letter-spacing:0.299px;right:72.70px;">2 weeks</span>
<svg style="left:1530px;top:564px;" width="22" height="22" viewBox="1530 564 22 22"><path d="M1546.83 571.23 A6.75 6.75 0 1 0 1546.47 579.44" fill="none" stroke="#006dca" stroke-width="2.2" stroke-linecap="round"/><path d="M1548.30 567.70 V572.65 H1543.20" fill="none" stroke="#006dca" stroke-width="2.2" stroke-linecap="round" stroke-linejoin="miter"/></svg>
<div style="left:232px;top:244px;width:231.5px;height:202.3px;background:#fff;border-radius:7px;box-shadow:0 1px 4px rgba(25,27,35,.25),0 0 0 1px rgba(196,199,207,.7);"></div>
<div style="left:243.4px;top:256.2px;width:17.6px;height:17.4px;background:#fff;border:1px solid #c4c7cf;border-radius:4.5px;"></div>
<span class="t" style="top:255px;font-size:16px;line-height:20px;color:#191b23;letter-spacing:0.321px;left:270.80px;">Informational</span>
<span class="t" style="top:254px;font-size:19px;line-height:24px;color:#a3a6b2;left:380.10px;font-family:'Liberation Mono',monospace;font-style:italic;font-weight:700;transform:scaleX(0.72);transform-origin:0 50%;">i</span>
<div style="left:243.4px;top:292.2px;width:17.6px;height:17.4px;background:#fff;border:1px solid #c4c7cf;border-radius:4.5px;"></div>
<span class="t" style="top:291px;font-size:16px;line-height:20px;color:#191b23;letter-spacing:0.258px;left:270.80px;">Navigational</span>
<span class="t" style="top:290px;font-size:19px;line-height:24px;color:#a3a6b2;left:374.90px;font-family:'Liberation Mono',monospace;font-style:italic;font-weight:700;transform:scaleX(0.72);transform-origin:0 50%;">i</span>
<div style="left:243.4px;top:328.25px;width:17.6px;height:17.4px;background:#fff;border:1px solid #c4c7cf;border-radius:4.5px;"></div>
<span class="t" style="top:327px;font-size:16px;line-height:20px;color:#191b23;letter-spacing:0.195px;left:270.80px;">Commercial</span>
<span class="t" style="top:326px;font-size:19px;line-height:24px;color:#a3a6b2;left:370.60px;font-family:'Liberation Mono',monospace;font-style:italic;font-weight:700;transform:scaleX(0.72);transform-origin:0 50%;">i</span>
<div style="left:243.4px;top:364.29999999999995px;width:17.6px;height:17.4px;background:#fff;border:1px solid #c4c7cf;border-radius:4.5px;"></div>
<span class="t" style="top:363px;font-size:16px;line-height:20px;color:#191b23;letter-spacing:0.271px;left:270.80px;">Transactional</span>
<span class="t" style="top:363px;font-size:19px;line-height:24px;color:#a3a6b2;left:382.00px;font-family:'Liberation Mono',monospace;font-style:italic;font-weight:700;transform:scaleX(0.72);transform-origin:0 50%;">i</span>
<div style="left:244.4px;top:405px;width:207.6px;height:31.4px;background:#008ff8;border-radius:6px;"></div>
<span class="t" style="top:411px;font-size:15.83px;line-height:20px;color:#fff;font-weight:700;letter-spacing:-0.450px;left:326.80px;">Apply</span>
<div style="left:228.8px;top:241px;width:238.4px;height:212px;border:3px solid #ff1a0d;border-radius:10.5px;"></div>
</div></body></html>
